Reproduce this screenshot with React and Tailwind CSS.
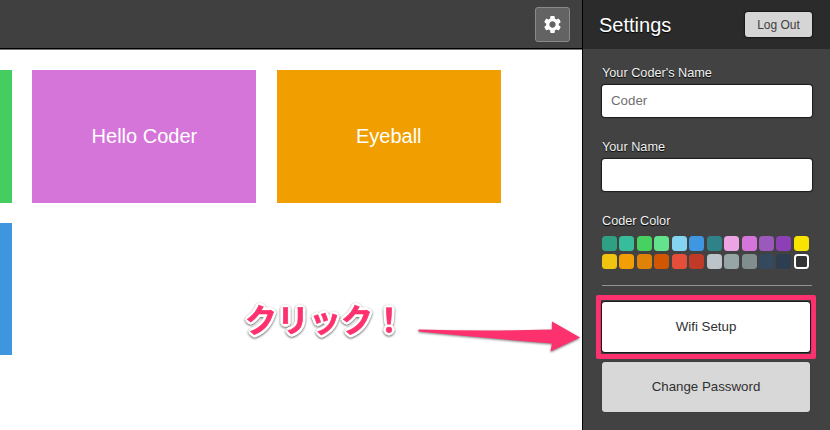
import React from "react";
import { MdSettings } from "react-icons/md";

const swatches = [
  "#2fa084", "#37bd9b", "#46d160", "#63e38c", "#85d5f2", "#3e97e0", "#2f8288", "#eda4e2", "#d575dc", "#9b59bb", "#8d40b5", "#f9e300",
  "#f1c40f", "#f29e05", "#e08207", "#d05602", "#e54e39", "#c03a28", "#bdc4c9", "#96a6a7", "#808e8e", "#34495e", "#2c3e50", "#333333",
];

function Field({ label, value }) {
  return (
    <div className="h-[74px]">
      <label className="block h-[21px] text-[12.7px] leading-[18px] text-[#f2f2f2] [text-shadow:0_1px_1px_#000]">{label}</label>
      <div className="flex h-[32px] w-[210px] items-center rounded-[3px] bg-white pl-[9px] text-[13.3px] text-[#707070] shadow-[0_0_1px_1px_#1c1c1c]">
        {value}
      </div>
    </div>
  );
}

function Card({ color, title }) {
  return (
    <div className={`flex h-[132.5px] w-[224px] shrink-0 items-center justify-center text-[20px] text-white ${color}`}>
      {title}
    </div>
  );
}

export default function App() {
  return (
    <div className="relative flex h-[430px] w-[830px] overflow-hidden bg-white font-['Liberation_Sans',Arial,sans-serif]">
      <main className="flex w-[582px] flex-col overflow-hidden">
        <header className="flex h-[50px] shrink-0 items-center justify-end border-b border-[#777] bg-[#404040] pr-[12px] shadow-[inset_0_-1px_0_#000]">
          <button className="flex h-[35px] w-[35px] items-center justify-center rounded-[3px] border border-[#8a8a8a] bg-[#636363] text-white">
            <MdSettings size={21} />
          </button>
        </header>
        <section className="-ml-[212px] flex w-[794px] flex-wrap gap-x-[20.4px] gap-y-[20px] pt-[20px]">
          <Card color="bg-[#46cd62]" />
          <Card color="bg-[#d575da]" title="Hello Coder" />
          <Card color="bg-[#f09e00]" title="Eyeball" />
          <Card color="bg-[#3e96de]" />
        </section>
      </main>

      <aside className="flex w-[248px] flex-col border-l border-black bg-[#424242]">
        <header className="flex h-[49px] items-center justify-between bg-[#2b2b2b] pl-[16px] pr-[18px]">
          <h1 className="text-[20px] text-white [text-shadow:0_1px_1px_#000]">Settings</h1>
          <button className="h-[25px] w-[67px] rounded-[3px] bg-[#d5d5d5] pt-[1px] text-[12px] text-[#404040] shadow-[0_0_1px_1px_#181818]">Log Out</button>
        </header>
        <div className="flex flex-col pl-[19px] pt-[15px]">
          <Field label="Your Coder's Name" value="Coder" />
          <Field label="Your Name" />
          <div className="h-[24px] text-[12.7px] leading-[18px] text-[#f2f2f2] [text-shadow:0_1px_1px_#000]">Coder Color</div>
          <div className="grid w-[210px] grid-cols-[repeat(12,17.45px)] gap-y-[3px]">
            {swatches.map((color, i) => (
              <span
                key={color}
                className={`h-[15px] w-[15px] rounded-[3.5px] ${i === 23 ? "border-2 border-white shadow-[0_0_1px_#000]" : ""}`}
                style={{ backgroundColor: color }}
              />
            ))}
          </div>
          <hr className="mt-[15.5px] w-[210px] border-t border-[#929292]" />
          <div className="-ml-[6px] mt-[9.5px] w-[220px] rounded-[2px] border-[5px] border-[#fc316e] px-px pb-[2px] pt-[2px]">
            <button className="block h-[50px] w-[208px] rounded-[3px] bg-white text-[13.3px] text-[#303030] shadow-[0_0_1px_1px_#181818]">
              Wifi Setup
            </button>
          </div>
          <button className="mt-[3px] h-[50px] w-[208px] rounded-[3px] bg-[#d8d8d8] text-[13.3px] text-[#303030] shadow-[0_0_1px_#222]">
            Change Password
          </button>
        </div>
      </aside>

      <div className="absolute left-[245px] top-[295px] whitespace-nowrap font-['Noto_Sans_CJK_JP',sans-serif] text-[32px] font-bold leading-[46px] text-[#fc316e] [-webkit-text-stroke:0.6px_#fc316e] [filter:drop-shadow(0_1px_1px_rgba(0,0,0,.6))] [text-shadow:3px_0_#fff,-3px_0_#fff,0_3px_#fff,0_-3px_#fff,2px_2px_#fff,-2px_2px_#fff,2px_-2px_#fff,-2px_-2px_#fff]">
        クリック！
      </div>
      <svg className="absolute left-[410px] top-[312px] [filter:drop-shadow(0_1px_1px_rgba(0,0,0,.5))]" width="180" height="50" viewBox="410 312 180 50">
        <path d="M418.5 329.5 Q487 331.5 552 329.5 L552 321.5 L580 337.5 L550.5 351.5 L552 343.5 Q484 338 418.5 331.5 Z" fill="#fc316e" />
      </svg>
    </div>
  );
}
